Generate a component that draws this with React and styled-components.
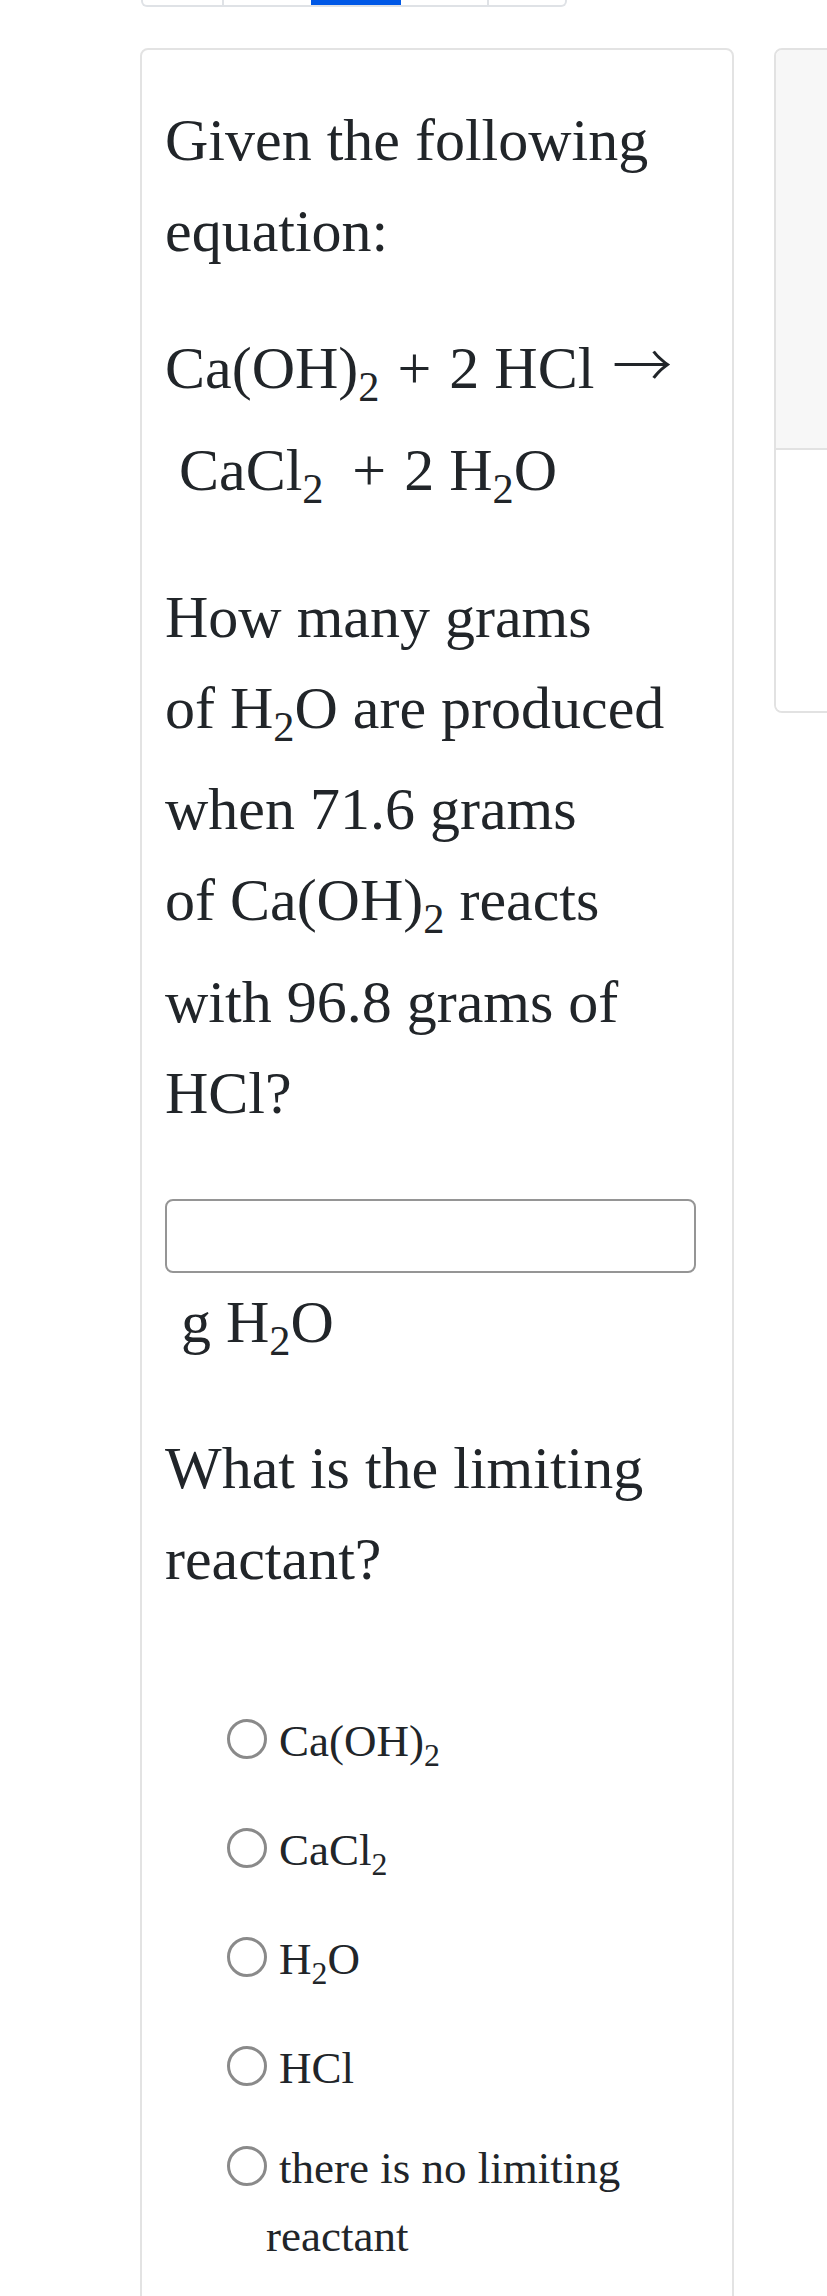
import styled, { createGlobalStyle } from "styled-components";

const GlobalStyle = createGlobalStyle`
  body {
    margin: 0;
    background: #ffffff;
    overflow-x: hidden;
    font-family: "Liberation Serif", "Times New Roman", serif;
    color: #212529;
  }
`;

const TABS = [
  { width: 79, active: false, divider: true },
  { width: 87, active: false, divider: false },
  { width: 90, active: true, divider: false },
  { width: 86, active: false, divider: true },
  { width: 80, active: false, divider: false },
];

function Sub({ children }) {
  return <SubText>{children}</SubText>;
}

const OPTIONS = [
  { id: "caoh2", label: <>Ca(OH)<Sub>2</Sub></> },
  { id: "cacl2", label: <>CaCl<Sub>2</Sub></> },
  { id: "h2o", label: <>H<Sub>2</Sub>O</> },
  { id: "hcl", label: <>HCl</> },
  { id: "none", label: <>there is no limiting reactant</> },
];

function Option({ label }) {
  return (
    <OptionRow>
      <Radio />
      {label}
    </OptionRow>
  );
}

export default function App() {
  return (
    <>
      <GlobalStyle />
      <TabStrip>
        {TABS.map((t, i) => (
          <TabCell key={i} width={t.width} active={t.active} divider={t.divider} />
        ))}
      </TabStrip>
      <CardRow>
        <QuestionCard>
          <Para>Given the following equation:</Para>
          <Equation>
            <EqLine>
              Ca(OH)<Sub>2</Sub><Op>+</Op>2 HCl<Arrow>→</Arrow>
            </EqLine>
            <EqLine indent>
              CaCl<Sub>2</Sub><Op wide>+</Op>2 H<Sub>2</Sub>O
            </EqLine>
          </Equation>
          <Question>
            How many grams <NoWrap>of H<Sub>2</Sub>O</NoWrap> are produced when 71.6 grams{" "}
            <NoWrap>of Ca(OH)<Sub>2</Sub></NoWrap> reacts with 96.8 grams of{" "}
            <NoWrap>HCl?</NoWrap>
          </Question>
          <AnswerInput type="text" aria-label="grams of water" />
          <Unit>
            g H<Sub>2</Sub>O
          </Unit>
          <Question tight>What is the limiting reactant?</Question>
          <OptionList>
            {OPTIONS.map((o) => (
              <Option key={o.id} label={o.label} />
            ))}
          </OptionList>
        </QuestionCard>
        <SideCard>
          <SideHeader />
          <SideBody />
        </SideCard>
      </CardRow>
    </>
  );
}

const TabStrip = styled.div`
  display: flex;
  margin-left: 141px;
  width: 422px;
  height: 5px;
  border: 2px solid #dfe2e6;
  border-top: none;
  border-radius: 0 0 6px 6px;
  overflow: hidden;
`;

const TabCell = styled.div`
  width: ${({ width }) => width}px;
  flex-shrink: 0;
  background: ${({ active }) => (active ? "#0058e6" : "transparent")};
  border-right: ${({ divider }) => (divider ? "2px solid #dfe2e6" : "none")};
`;

const CardRow = styled.div`
  display: flex;
  gap: 40px;
  margin-top: 41px;
  padding-left: 140px;
`;

const QuestionCard = styled.div`
  width: 594px;
  flex-shrink: 0;
  box-sizing: border-box;
  border: 2px solid #e3e3e3;
  border-radius: 8px;
  padding: 45px 23px 200px;
  font-size: 60px;
  line-height: 91px;
`;

const Para = styled.p`
  margin: 0;
`;

const SubText = styled.sub`
  font-size: 0.707em;
  vertical-align: -0.31em;
  line-height: 1.76;
`;

const Equation = styled.div`
  margin-top: 46px;
`;

const EqLine = styled.div`
  white-space: nowrap;
  padding-left: ${({ indent }) => (indent ? "14px" : "0")};
`;

const Op = styled.span`
  margin: ${({ wide }) => (wide ? "0 0.3em 0 0.48em" : "0 0.3em")};
`;

const Arrow = styled.span`
  display: inline-block;
  margin-left: 0.3em;
  font-family: "Noto Sans CJK JP", "DejaVu Serif", serif;
  font-weight: 300;
  font-size: 1em;
  line-height: 0;
`;

const Question = styled.p`
  margin: ${({ tight }) => (tight ? "44px 0 0" : "45px 0 0")};
`;

const NoWrap = styled.span`
  white-space: nowrap;
`;

const AnswerInput = styled.input`
  display: block;
  margin-top: 60px;
  width: 531px;
  height: 74px;
  box-sizing: border-box;
  border: 2px solid #959595;
  border-radius: 8px;
  background: #ffffff;
  font: inherit;
  font-size: 40px;
  padding: 0 12px;
  outline: none;
`;

const Unit = styled.div`
  margin-top: 4px;
  padding-left: 16px;
`;

const OptionList = styled.div`
  display: flex;
  flex-direction: column;
  gap: 33px;
  margin-top: 103px;
  padding-left: 101px;
  font-size: 45px;
  line-height: 1.5;
`;

const OptionRow = styled.div`
  cursor: pointer;
`;

const Radio = styled.span`
  display: inline-block;
  width: 40px;
  height: 40px;
  box-sizing: border-box;
  border: 3px solid #8a8a8a;
  border-radius: 50%;
  vertical-align: -3px;
  margin-left: -39px;
  margin-right: 12px;
`;

const SideCard = styled.div`
  width: 320px;
  flex-shrink: 0;
  align-self: flex-start;
  box-sizing: border-box;
  border: 2px solid #e2e2e2;
  border-radius: 8px;
  overflow: hidden;
`;

const SideHeader = styled.div`
  height: 398px;
  background: #f7f7f7;
  border-bottom: 2px solid #e2e2e2;
`;

const SideBody = styled.div`
  height: 261px;
  background: #ffffff;
`;
